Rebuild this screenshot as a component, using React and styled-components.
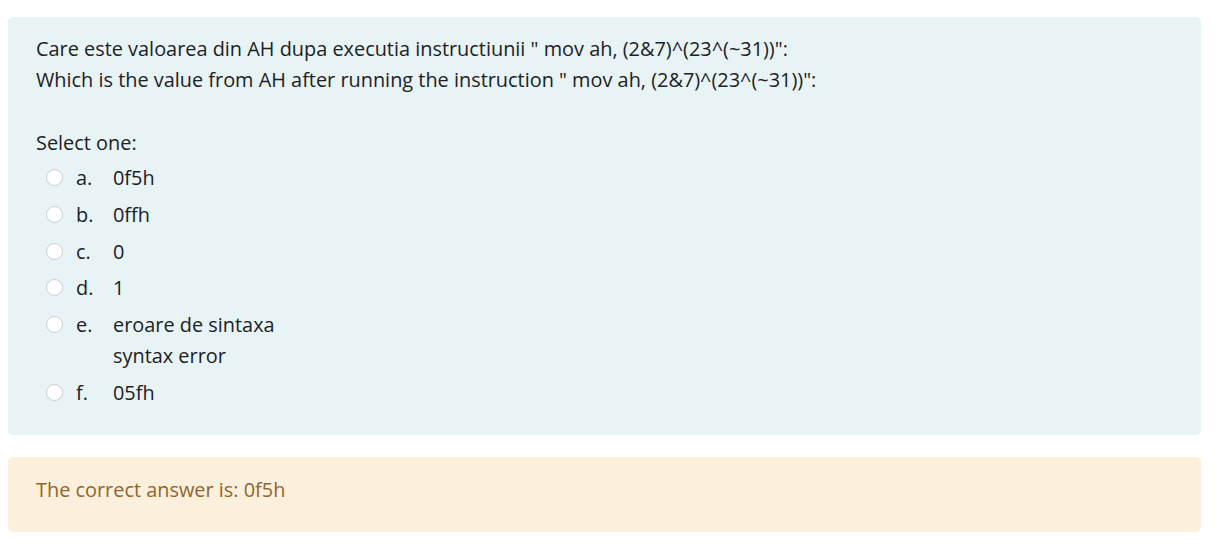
import React from 'react'
import styled, { createGlobalStyle } from 'styled-components'

const GlobalStyle = createGlobalStyle`
  body {
    margin: 0;
    background: #fff;
    font-family: "Segoe UI", "Open Sans", "Noto Sans", sans-serif;
    color: #1d2125;
  }
`

const Page = styled.div`
  padding: 17px 22px 15px 8px;
  box-sizing: border-box;
`

const QuestionCard = styled.div`
  background-color: #e7f3f5;
  border-radius: 5px;
  padding: 16px 28px 24px;
  font-size: 19.9px;
  line-height: 31px;
`

const QText = styled.div`
  margin-bottom: 32px;
`

const Prompt = styled.div`
  margin-bottom: 1px;
`

const OptionList = styled.div`
  display: flex;
  flex-direction: column;
`

const Option = styled.label`
  display: flex;
  align-items: flex-start;
  padding: 3px 0 2.8px 10px;
`

const Radio = styled.span`
  flex: none;
  width: 15px;
  height: 15px;
  margin-top: 7px;
  margin-right: 13px;
  border: 1px solid #c9cdd0;
  border-radius: 50%;
  background: #fff;
`

const Letter = styled.span`
  flex: none;
  width: 37px;
`

const Answer = styled.div``

const FeedbackCard = styled.div`
  margin-top: 22px;
  background-color: #fcefdc;
  border-radius: 5px;
  padding: 17px 28px 27px;
  color: #8e662e;
  font-size: 19.9px;
  line-height: 31px;
`

const options = [
  { letter: 'a.', lines: ['0f5h'] },
  { letter: 'b.', lines: ['0ffh'] },
  { letter: 'c.', lines: ['0'] },
  { letter: 'd.', lines: ['1'] },
  { letter: 'e.', lines: ['eroare de sintaxa', 'syntax error'] },
  { letter: 'f.', lines: ['05fh'] },
]

export default function App() {
  return (
    <Page>
      <GlobalStyle />
      <QuestionCard>
        <QText>
          <div>Care este valoarea din AH dupa executia instructiunii " mov ah, (2&amp;7)^(23^(~31))":</div>
          <div>Which is the value from AH after running the instruction " mov ah, (2&amp;7)^(23^(~31))":</div>
        </QText>
        <Prompt>Select one:</Prompt>
        <OptionList>
          {options.map((o) => (
            <Option key={o.letter}>
              <Radio />
              <Letter>{o.letter}</Letter>
              <Answer>
                {o.lines.map((l) => (
                  <div key={l}>{l}</div>
                ))}
              </Answer>
            </Option>
          ))}
        </OptionList>
      </QuestionCard>
      <FeedbackCard>The correct answer is: 0f5h</FeedbackCard>
    </Page>
  )
}
